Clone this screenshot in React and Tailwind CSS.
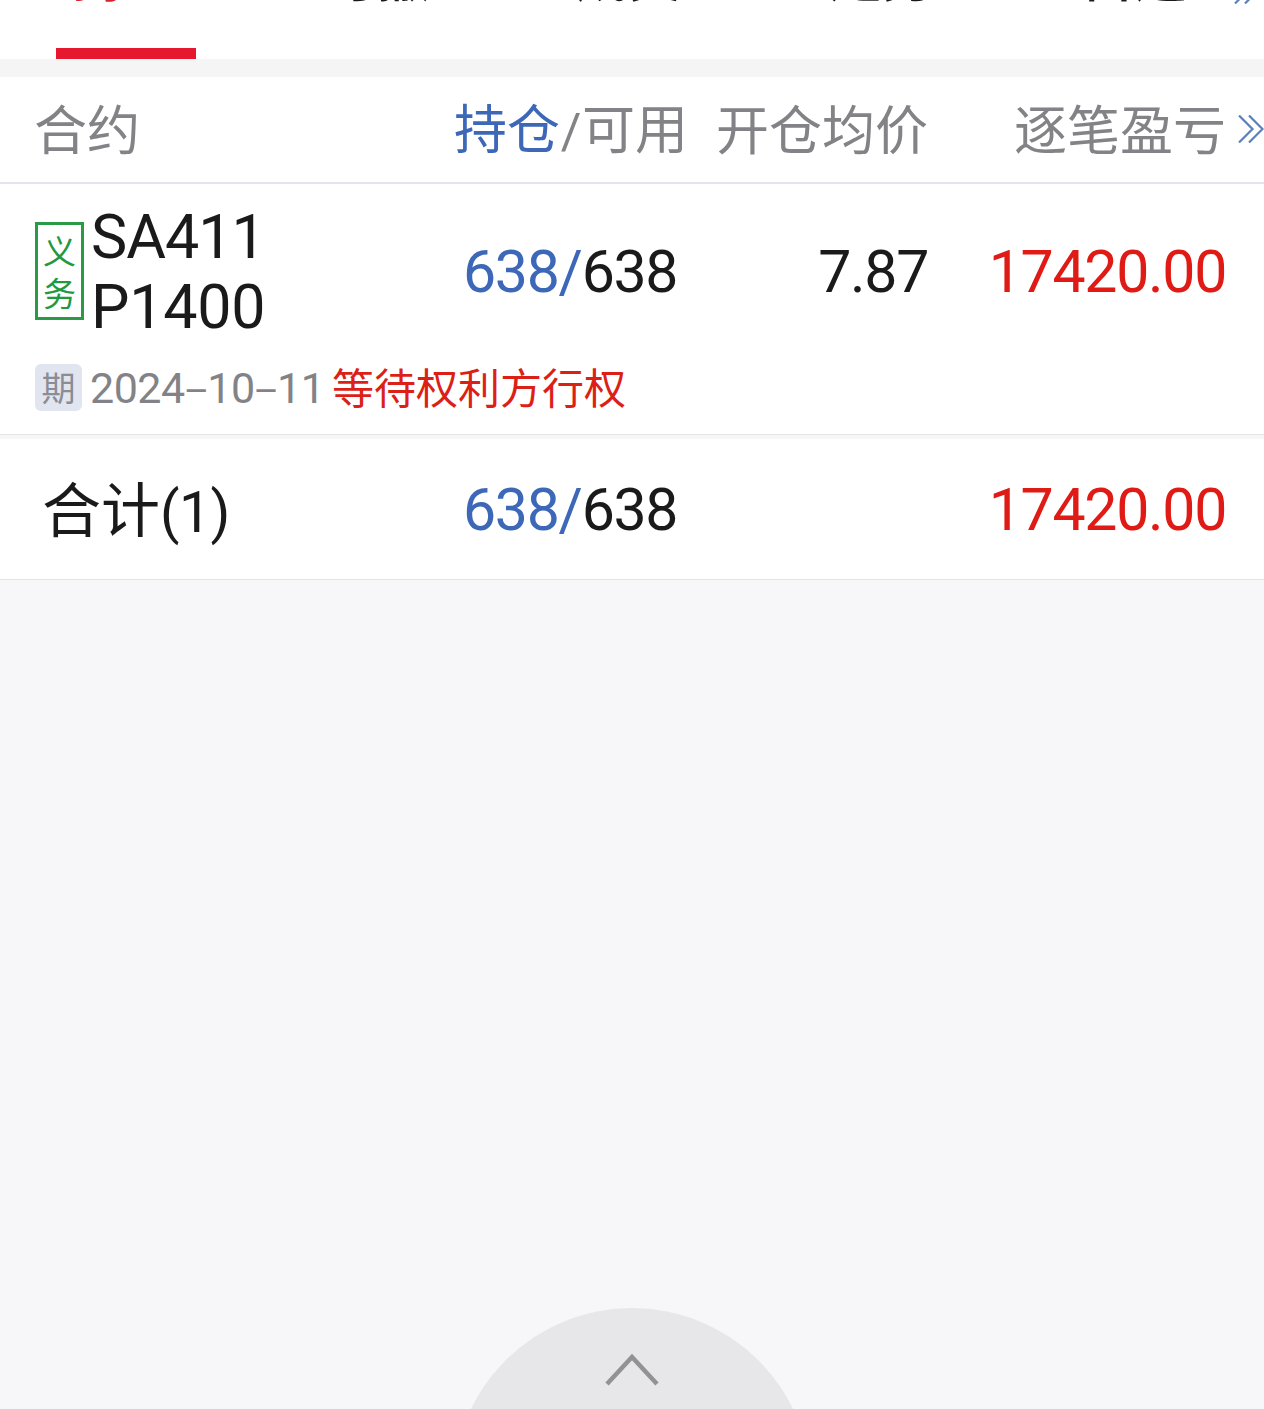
const tabs = [
  { label: "持仓", box: "ml-[72px]", active: true },
  { label: "可撤", box: "ml-[146px]" },
  { label: "成交", box: "ml-[145px]" },
  { label: "走势", box: "ml-[148px]" },
  { label: "自选", box: "ml-[146px]" },
];

const digits = "font-['Roboto','Noto_Sans_CJK_SC',sans-serif]";

function Chevrons() {
  return (
    <svg className="h-7 w-[26px] shrink-0" viewBox="0 0 26 28" fill="none" stroke="#5b80bd" strokeWidth="2.2">
      <path d="M1 0.5L14.5 14L1 27.5M11 0.5L24.5 14L11 27.5" />
    </svg>
  );
}

function Lots() {
  return (
    <div className={`w-[262px] pl-[43px] text-[59px] tracking-[-1.3px] ${digits}`}>
      <span className="text-[#3d68b8]">638/</span>
      <span>638</span>
    </div>
  );
}

export default function App() {
  return (
    <div className="flex h-[1409px] w-[1264px] flex-col overflow-hidden bg-[#f7f7f9] font-['Noto_Sans_CJK_SC',sans-serif] text-[#1a1a1a]">
      <nav className="flex h-[59px] shrink-0 flex-col justify-between overflow-hidden bg-white">
        <div className="flex h-[4px] items-end text-[53px] leading-[60px] font-medium whitespace-nowrap">
          {tabs.map((t) => (
            <span key={t.label} className={`w-[106px] shrink-0 ${t.box} ${t.active ? "text-[#d8202f]" : ""}`}>
              {t.label}
            </span>
          ))}
          <span className="ml-[47px] flex"><Chevrons /></span>
        </div>
        <div className="ml-14 h-[11px] w-[140px] bg-[#e5182f]" />
      </nav>
      <div className="h-[18px] shrink-0 bg-[#f5f5f5]" />
      <header className="flex h-[107px] shrink-0 items-center border-b-2 border-[#e4e5ea] bg-white pb-[5px] text-[53px] leading-none whitespace-nowrap text-[#838387]">
        <div className="w-[420px] pl-[34px]">合约</div>
        <div className="w-[262px] pt-[3px] pl-[34px]">
          <span className="text-[#3d68b8]">持仓</span>
          <span className={`inline-block w-[22px] text-center text-[50px] leading-none ${digits}`}>/</span>可用
        </div>
        <div className="w-[246px] pl-[34px]">开仓均价</div>
        <div className="w-[298px] text-right">逐笔盈亏</div>
        <div className="pt-[3px] pl-3"><Chevrons /></div>
      </header>
      <section className="h-[251px] shrink-0 border-b border-[#e4e4e4] bg-white pt-[18px]">
        <div className="flex h-[140px] items-center leading-[70px]">
          <div className="flex w-[420px] items-center pl-[35px]">
            <div className="-mt-[2px] flex h-[98px] w-[49px] flex-col items-center justify-center border-[3px] border-[#2b9a46] text-[33px] leading-[42px] text-[#22993f]">
              <span>义</span>
              <span>务</span>
            </div>
            <div className={`pl-[7px] text-[61px] ${digits}`}>
              <div className="tracking-[-1px]">SA411</div>
              <div className="tracking-[-0.3px]">P1400</div>
            </div>
          </div>
          <Lots />
          <div className={`w-[246px] text-right text-[59px] tracking-[-1.3px] ${digits}`}>7.87</div>
          <div className={`w-[298px] text-right text-[59px] tracking-[-1.3px] text-[#e01a14] ${digits}`}>17420.00</div>
        </div>
        <div className="mt-[22px] flex h-[47px] items-center pl-[35px] leading-none">
          <span className="flex h-[47px] w-[47px] items-center justify-center rounded-md bg-[#e1e5f0] pb-0.5 text-[34px] text-[#8b8d94]">期</span>
          <span className={`w-[250px] pt-0.5 pl-2 text-[43px] tracking-[-0.5px] text-[#838387] ${digits}`}>2024‒10‒11</span>
          <span className="pb-[3px] text-[42px] text-[#dc1f17]">等待权利方行权</span>
        </div>
      </section>
      <div className="h-1 shrink-0" />
      <section className="flex h-[141px] shrink-0 items-center border-b border-[#e4e4e4] bg-white leading-none">
        <div className="w-[420px] pl-[42px] text-[59px]">
          合计<span className={`text-[57px] tracking-[-0.5px] ${digits}`}>(1)</span>
        </div>
        <Lots />
        <div className="w-[246px]" />
        <div className={`w-[298px] text-right text-[59px] tracking-[-1.3px] text-[#e01a14] ${digits}`}>17420.00</div>
      </section>
      <footer className="mt-auto flex h-[101px] justify-center overflow-hidden">
        <button className="flex h-[358px] w-[358px] shrink-0 justify-center rounded-full bg-[#e7e7e9] pt-[45px]">
          <svg className="h-[34px] w-[54px]" viewBox="0 0 54 34" fill="none" stroke="#929292" strokeWidth="4.5">
            <path d="M2 31L27 4L52 31" />
          </svg>
        </button>
      </footer>
    </div>
  );
}
